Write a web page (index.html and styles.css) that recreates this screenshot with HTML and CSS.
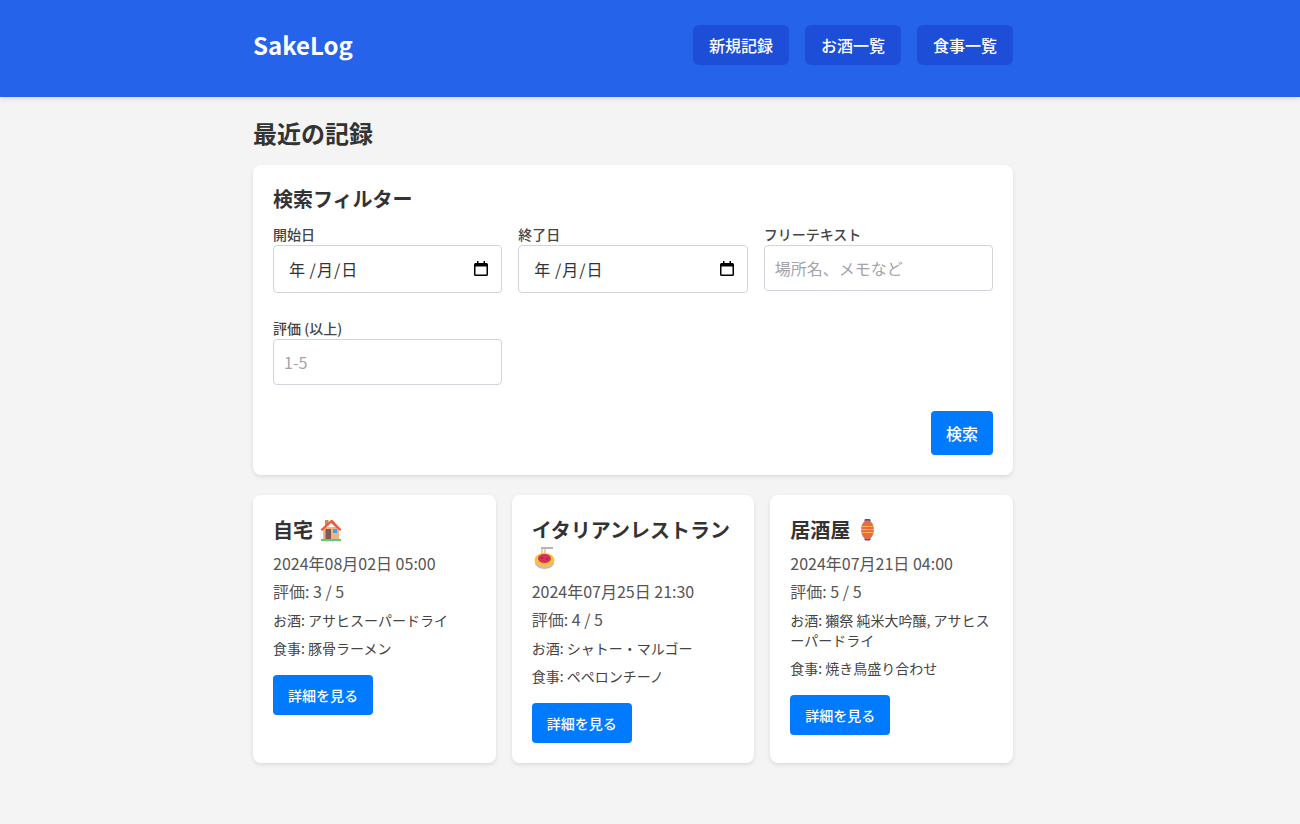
FILE: index.html
```html
<!DOCTYPE html>
<html lang="ja">
<head>
<meta charset="utf-8">
<title>SakeLog</title>
<link rel="stylesheet" href="styles.css">
</head>
<body>
<header class="site-header">
  <div class="container header-inner">
    <a class="logo">SakeLog</a>
    <nav class="nav">
      <a class="nav-btn">新規記録</a>
      <a class="nav-btn">お酒一覧</a>
      <a class="nav-btn">食事一覧</a>
    </nav>
  </div>
</header>
<main class="container">
  <h1 class="page-title">最近の記録</h1>
  <form class="filter">
    <h2 class="filter-title">検索フィルター</h2>
    <div class="filter-grid">
      <div class="field"><label>開始日</label>
        <div class="date-input"><span class="date-text"><span>年</span> <span>/</span><span>月</span><span>/</span><span>日</span></span>
          <svg class="cal" viewBox="0 0 14 15" width="14" height="15"><path d="M3 0v2H1.500A1.500 1.500 0 0 0 0 3.500v10A1.500 1.500 0 0 0 1.500 15h11a1.500 1.500 0 0 0 1.500-1.500v-10A1.500 1.500 0 0 0 12.500 2H11V0H9.500v2h-5V0zM1.500 5.500h11v8h-11z"/></svg>
        </div>
      </div>
      <div class="field"><label>終了日</label>
        <div class="date-input"><span class="date-text"><span>年</span> <span>/</span><span>月</span><span>/</span><span>日</span></span>
          <svg class="cal" viewBox="0 0 14 15" width="14" height="15"><path d="M3 0v2H1.500A1.500 1.500 0 0 0 0 3.500v10A1.500 1.500 0 0 0 1.500 15h11a1.500 1.500 0 0 0 1.500-1.500v-10A1.500 1.500 0 0 0 12.500 2H11V0H9.500v2h-5V0zM1.500 5.500h11v8h-11z"/></svg>
        </div>
      </div>
      <div class="field"><label>フリーテキスト</label><input type="text" placeholder="場所名、メモなど"></div>
      <div class="field"><label>評価 (以上)</label><input type="number" placeholder="1-5"></div>
    </div>
    <div class="filter-actions"><button type="button" class="btn btn-search">検索</button></div>
  </form>
  <div class="cards">
    <article class="card">
      <h3 class="card-title">自宅 <svg class="emoji" viewBox="0 0 25 25" width="25" height="25" role="img" aria-label="house">
        <rect x="7" y="3" width="3.500" height="6" fill="#c98a5e"/>
        <rect x="5" y="10" width="16" height="12" fill="#eeb283"/>
        <rect x="7.500" y="12" width="5.500" height="10" fill="#7e5a52"/>
        <rect x="15" y="12" width="4" height="4" fill="#36a6f0"/>
        <path d="M13 3 2.500 12.500 4 14 13 6l9 8 1.500-1.500-4-4L15 3.500Q13.500 2.500 13 3z" fill="#ec5a3c"/>
        <rect x="3" y="22" width="20" height="2" fill="#55cd78"/>
      </svg></h3>
      <p class="meta">2024年08月02日 05:00</p>
      <p class="meta rating">評価: 3 / 5</p>
      <p class="small">お酒: アサヒスーパードライ</p>
      <p class="small">食事: 豚骨ラーメン</p>
      <a class="btn btn-detail">詳細を見る</a>
    </article>
    <article class="card">
      <h3 class="card-title">イタリアンレストラン <svg class="emoji" viewBox="0 0 25 25" width="25" height="25" role="img" aria-label="spaghetti">
        <path d="M10 2v7M13 2v7" stroke="#e3c777" stroke-width="1.500" fill="none"/>
        <path d="M9 3h12" stroke="#b9b2b4" stroke-width="2" fill="none"/>
        <ellipse cx="12.500" cy="18" rx="9.500" ry="6" fill="#c7b3e2"/>
        <ellipse cx="12.500" cy="15" rx="10" ry="7" fill="#f5c23e"/>
        <ellipse cx="12.500" cy="13.500" rx="6.500" ry="4.500" fill="#d92f5c"/>
        <circle cx="10" cy="13" r="1" fill="#a81e45"/>
        <circle cx="15" cy="14" r="1" fill="#a81e45"/>
      </svg></h3>
      <p class="meta">2024年07月25日 21:30</p>
      <p class="meta rating">評価: 4 / 5</p>
      <p class="small">お酒: シャトー・マルゴー</p>
      <p class="small">食事: ペペロンチーノ</p>
      <a class="btn btn-detail">詳細を見る</a>
    </article>
    <article class="card">
      <h3 class="card-title">居酒屋 <svg class="emoji" viewBox="0 0 25 25" width="25" height="25" role="img" aria-label="lantern">
        <rect x="9.500" y="2" width="6" height="3" rx="1" fill="#5b4b9e"/>
        <rect x="9.500" y="20.500" width="6" height="3" rx="1" fill="#5b4b9e"/>
        <ellipse cx="12.500" cy="12.700" rx="6.500" ry="9.500" fill="#ea6a42"/>
        <path d="M6.400 9.500h12.200M6 12.500h13M6.400 15.500h12.200" stroke="#f9b84a" stroke-width="1" fill="none"/>
      </svg></h3>
      <p class="meta">2024年07月21日 04:00</p>
      <p class="meta rating">評価: 5 / 5</p>
      <p class="small">お酒: 獺祭 純米大吟醸, アサヒスーパードライ</p>
      <p class="small">食事: 焼き鳥盛り合わせ</p>
      <a class="btn btn-detail">詳細を見る</a>
    </article>
  </div>
</main>
</body>
</html>
```
FILE: styles.css
```css
* { box-sizing: border-box; }
html, body { margin: 0; padding: 0; }
body {
  background: #f4f4f4;
  color: #333;
  font-family: "Noto Sans CJK JP", "Noto Sans", sans-serif;
  font-size: 16px;
  line-height: 1.5;
}
.container { width: 760px; margin-left: 253px; }
.site-header {
  background: #2563eb;
  height: 97px;
  box-shadow: 0 2px 5px rgba(0,0,0,.1);
}
.header-inner {
  display: flex;
  justify-content: space-between;
  align-items: center;
  padding-top: 25px;
}
.logo { color: #fff; font-size: 24px; font-weight: 700; line-height: 40px; }
.nav { display: flex; gap: 16px; }
.nav-btn {
  background: #1d4ed8;
  color: #fff;
  font-size: 16px;
  font-weight: 500;
  padding: 0 16px;
  height: 40px;
  line-height: 40px;
  border-radius: 6px;
}
.page-title { font-size: 24px; font-weight: 700; line-height: 36px; margin: 18px 0 14px; }
.filter {
  background: #fff;
  border-radius: 8px;
  box-shadow: 0 2px 4px rgba(0,0,0,.1);
  padding: 20px;
}
.filter-title { font-size: 20px; font-weight: 700; line-height: 28px; margin: 0 0 13px; }
.filter-grid {
  display: grid;
  grid-template-columns: repeat(3, 1fr);
  gap: 27px 16px;
}
.field { min-width: 0; }
.field label { display: block; font-size: 14px; font-weight: 500; line-height: 16px; margin-bottom: 3px; color: #444; }
.field input {
  display: block;
  width: 100%;
  font: inherit;
  color: #333;
  border: 1px solid #d1d5db;
  border-radius: 4px;
  padding: 10px;
  background: #fff;
}
.field input::placeholder { color: #a3a3a8; }
.date-input {
  display: flex;
  align-items: center;
  justify-content: space-between;
  height: 48px;
  border: 1px solid #d1d5db;
  border-radius: 4px;
  padding: 0 13px 0 15px;
  background: #fff;
}
.date-text span + span { margin-left: 1px; }
.cal { flex: none; margin-top: -1px; }
.filter-actions { display: flex; justify-content: flex-end; margin-top: 26px; }
.btn {
  display: inline-block;
  background: #007bff;
  color: #fff;
  border: 0;
  border-radius: 4px;
  font-family: inherit;
  font-weight: 500;
}
.btn-search { font-size: 16px; height: 44px; width: 62px; padding: 0; }
.cards {
  display: grid;
  grid-template-columns: repeat(3, 1fr);
  gap: 16px;
  margin-top: 20px;
  padding-bottom: 61px;
}
.card {
  background: #fff;
  border-radius: 8px;
  box-shadow: 0 2px 4px rgba(0,0,0,.1);
  padding: 20px;
}
.card-title { font-size: 20px; font-weight: 700; line-height: 28px; margin: 1px 0 7px; }
.emoji { vertical-align: -4px; margin-top: -5px; }
.meta { font-size: 16px; line-height: 24px; margin: 0 0 4px; color: #555; }
.rating { margin-bottom: 7px; }
.small { font-size: 14px; line-height: 20px; margin: 0 0 8px; color: #444; }
.btn-detail { font-size: 14px; line-height: 40px; height: 40px; padding: 0 15px; margin-top: 9px; }
```
